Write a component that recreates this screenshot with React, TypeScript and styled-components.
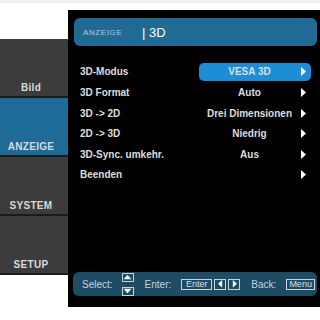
import React from 'react';
import styled, {createGlobalStyle} from 'styled-components';

const GlobalStyle = createGlobalStyle`
  html, body {
    margin: 0;
    padding: 0;
    background: #ffffff;
  }
  body {
    font-family: "Liberation Sans", Arial, sans-serif;
  }
`;

const Screen = styled.div`
  width: 320px;
  height: 320px;
  overflow: hidden;
  background: #ffffff;
  display: flex;
  flex-direction: column;
`;

const TopStrip = styled.div`
  height: 3px;
  background: #f1f1f1;
  margin-bottom: 7px;
`;

const Body = styled.div`
  display: flex;
  align-items: flex-start;
`;

const Sidebar = styled.div`
  width: 68px;
  margin-top: 29px;
  display: flex;
  flex-direction: column;
`;

const SideItem = styled.div<{$active?: boolean}>`
  height: 59px;
  border-bottom: 2px solid #1c1c1c;
  background: ${p => (p.$active ? '#1e6b97' : '#3c3c3c')};
  color: #d6dadd;
  font-size: 10px;
  font-weight: bold;
  letter-spacing: 0.3px;
  display: flex;
  align-items: flex-end;
  justify-content: center;
  padding: 0 6px 3px 0;
  box-sizing: border-box;
`;

const Panel = styled.div`
  width: 252px;
  height: 297px;
  background: #000000;
  display: flex;
  flex-direction: column;
  padding: 8px 3px 11px 6px;
  box-sizing: border-box;
`;

const Header = styled.div`
  height: 28px;
  border-radius: 6px;
  background: #206a93;
  display: flex;
  align-items: center;
  padding-left: 9px;
`;

const HeaderSection = styled.span`
  font-size: 8px;
  letter-spacing: 0.6px;
  color: #b4cad8;
  width: 59px;
`;

const HeaderTitle = styled.span`
  font-size: 13px;
  color: #ffffff;
`;

const Rows = styled.div`
  margin-top: 15.7px;
  display: flex;
  flex-direction: column;
`;

const Row = styled.div`
  height: 20.6px;
  display: flex;
  align-items: center;
  padding-left: 6px;
`;

const Label = styled.span`
  flex: 1;
  font-size: 10px;
  font-weight: bold;
  color: #dedede;
`;

const Value = styled.div<{$selected?: boolean}>`
  width: 112px;
  height: 18px;
  border-radius: 5px;
  background: ${p => (p.$selected ? '#1d8ed6' : 'transparent')};
  display: flex;
  align-items: center;
  padding-right: 5px;
  box-sizing: border-box;
  margin-right: 6px;
`;

const ValueText = styled.span`
  flex: 1;
  text-align: center;
  font-size: 10px;
  font-weight: bold;
  color: #dedede;
  white-space: nowrap;
`;

const Footer = styled.div`
  margin-top: auto;
  margin-left: -1px;
  height: 24px;
  border-radius: 6px;
  background: #1f4c65;
  display: flex;
  align-items: center;
  padding-left: 9px;
  color: #c4d4dc;
  font-size: 10px;
`;

const FooterLabel = styled.span<{$gap: number}>`
  margin-right: ${p => p.$gap}px;
`;

const KeyStack = styled.div`
  display: flex;
  flex-direction: column;
  gap: 5px;
  margin-right: 9px;
`;

const KeyBox = styled.div<{$w: number; $h?: number}>`
  width: ${p => p.$w}px;
  height: ${p => p.$h ?? 11}px;
  border: 1px solid #c4d4dc;
  box-sizing: border-box;
  display: flex;
  align-items: center;
  justify-content: center;
  font-size: 9px;
  line-height: 1;
  color: #d4e0e6;
  margin-right: 2px;
`;

const Group = styled.div<{$gap: number}>`
  display: flex;
  align-items: center;
  margin-right: ${p => p.$gap}px;
`;

const Arrow = ({dir = 'right', size = 6, color = '#ffffff'}: {dir?: 'right' | 'left' | 'up' | 'down'; size?: number; color?: string}) => {
  const pts: Record<string, string> = {
    right: '1,0 6,4.5 1,9',
    left: '5,0 0,4.5 5,9',
    up: '0,6 4.5,1 9,6',
    down: '0,1 4.5,6 9,1',
  };
  const vertical = dir === 'up' || dir === 'down';
  return (
    <svg width={vertical ? 9 * size / 6 : size} height={vertical ? 6 * size / 6 : 9 * size / 6} viewBox={vertical ? '0 0 9 7' : '0 0 6 9'}>
      <polygon points={pts[dir]} fill={color} />
    </svg>
  );
};

const rows = [
  {label: '3D-Modus', value: 'VESA 3D', selected: true},
  {label: '3D Format', value: 'Auto'},
  {label: '3D -> 2D', value: 'Drei Dimensionen'},
  {label: '2D -> 3D', value: 'Niedrig'},
  {label: '3D-Sync. umkehr.', value: 'Aus'},
  {label: 'Beenden', value: ''},
];

export default function App() {
  return (
    <Screen>
      <GlobalStyle />
      <TopStrip />
      <Body>
        <Sidebar>
          <SideItem>Bild</SideItem>
          <SideItem $active>ANZEIGE</SideItem>
          <SideItem>SYSTEM</SideItem>
          <SideItem>SETUP</SideItem>
        </Sidebar>
        <Panel>
          <Header>
            <HeaderSection>ANZEIGE</HeaderSection>
            <HeaderTitle>| 3D</HeaderTitle>
          </Header>
          <Rows>
            {rows.map(r => (
              <Row key={r.label}>
                <Label>{r.label}</Label>
                <Value $selected={r.selected}>
                  <ValueText>{r.value}</ValueText>
                  <Arrow dir="right" />
                </Value>
              </Row>
            ))}
          </Rows>
          <Footer>
            <FooterLabel $gap={9}>Select:</FooterLabel>
            <KeyStack>
              <KeyBox $w={12} $h={9}>
                <Arrow dir="up" size={6} />
              </KeyBox>
              <KeyBox $w={12} $h={9}>
                <Arrow dir="down" size={6} />
              </KeyBox>
            </KeyStack>
            <FooterLabel $gap={10}>Enter:</FooterLabel>
            <Group $gap={9}>
              <KeyBox $w={31}>Enter</KeyBox>
              <KeyBox $w={12}>
                <Arrow dir="left" size={5} />
              </KeyBox>
              <KeyBox $w={12}>
                <Arrow dir="right" size={5} />
              </KeyBox>
            </Group>
            <FooterLabel $gap={10}>Back:</FooterLabel>
            <KeyBox $w={29}>Menu</KeyBox>
          </Footer>
        </Panel>
      </Body>
    </Screen>
  );
}
